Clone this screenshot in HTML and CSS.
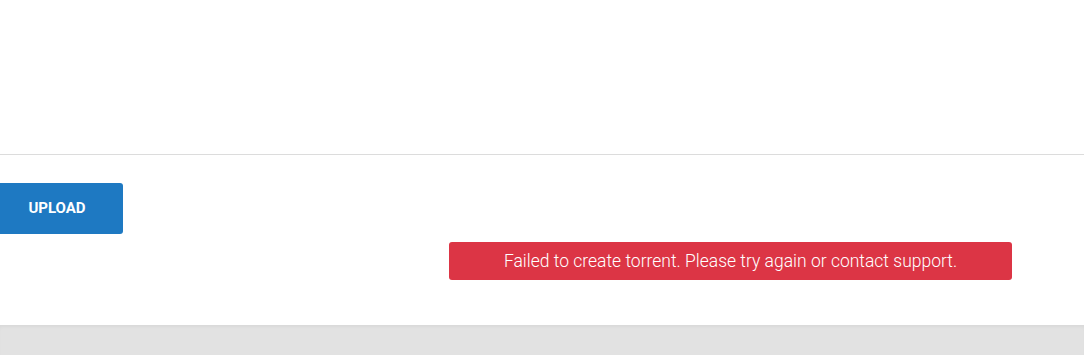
FILE: index.html
```html
<!DOCTYPE html>
<html lang="en">
<head>
 <meta charset="UTF-8">
 <title>Upload</title>
 <link rel="stylesheet" href="styles.css">
</head>
<body>
<div class="top"></div>
<div class="main">
 <button class="upload-btn">UPLOAD</button>
 <div class="alert">Failed to create torrent. Please try again or contact support.</div>
</div>
<div class="footer"></div>
</body>
</html>
```

FILE: styles.css
```css
*{
    margin: 0;
    padding: 0;
    box-sizing: border-box;
    font-family: 'Roboto', 'Liberation Sans', sans-serif;
}
body{
    background-color: #fff;
    overflow: hidden;
}
.top{
    height: 155px;
    border-bottom: 1px solid #dcdcdc;
}
.main{
    height: 170px;
    padding-top: 28px;
    display: flex;
    flex-direction: column;
    align-items: flex-start;
}
.upload-btn{
    margin-left: -9px;
    width: 132px;
    height: 51px;
    padding-bottom: 2px;
    border: none;
    border-radius: 3px;
    background-color: #1e79c2;
    color: #fff;
    font-size: 15px;
    font-weight: 700;
}
.alert{
    margin-top: 8px;
    margin-left: 449px;
    width: 563px;
    height: 38px;
    border-radius: 3px;
    background-color: #dc3545;
    color: #fff;
    font-size: 17.5px;
    font-weight: 300;
    display: flex;
    align-items: center;
    justify-content: center;
}
.footer{
    height: 40px;
    background-color: #e2e2e2;
    box-shadow: inset 0 3px 4px -2px rgba(0, 0, 0, 0.06);
}
```
